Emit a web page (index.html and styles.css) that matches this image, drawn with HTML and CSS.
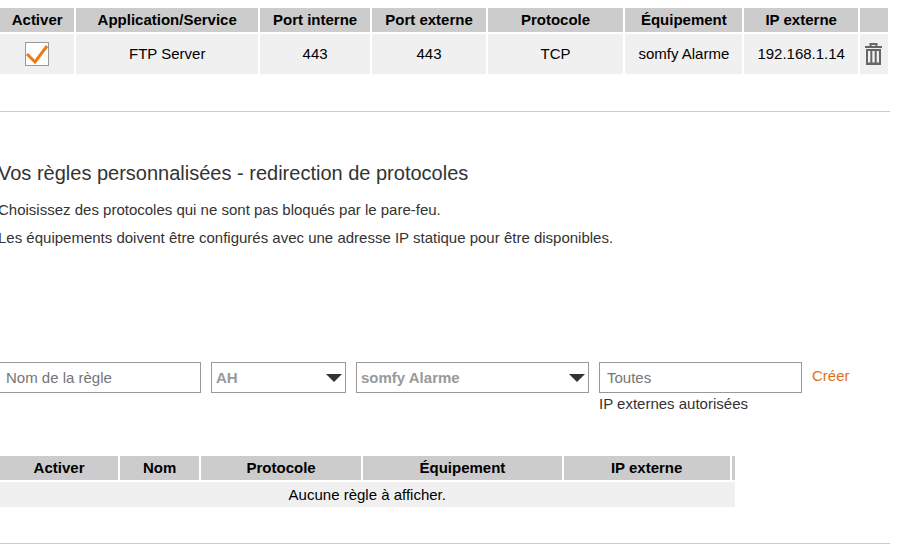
FILE: index.html
```html
<!DOCTYPE html>
<html lang="fr">
<head>
    <meta charset="UTF-8">
    <meta name="viewport" content="width=device-width, initial-scale=1.0">
    <title>Pare-feu - règles personnalisées</title>
    <link rel="stylesheet" href="styles.css">
</head>
<body>
    <main class="page">
        <section class="section section-ports">
            <table class="rules">
                <colgroup>
                    <col class="col-activer">
                    <col class="col-service">
                    <col class="col-interne">
                    <col class="col-externe">
                    <col class="col-protocole">
                    <col class="col-equipement">
                    <col class="col-ip">
                    <col class="col-action">
                </colgroup>
                <thead>
                    <tr>
                        <th>Activer</th>
                        <th>Application/Service</th>
                        <th>Port interne</th>
                        <th>Port externe</th>
                        <th>Protocole</th>
                        <th>Équipement</th>
                        <th>IP externe</th>
                        <th></th>
                    </tr>
                </thead>
                <tbody>
                    <tr class="rule">
                        <td>
                            <label class="check">
                                <input type="checkbox" aria-label="Activer la règle FTP Server" checked>
                                <svg viewBox="0 0 24 24" aria-hidden="true"><path d="M2 12l8 8L22 4"/></svg>
                            </label>
                        </td>
                        <td>FTP Server</td>
                        <td>443</td>
                        <td>443</td>
                        <td>TCP</td>
                        <td>somfy Alarme</td>
                        <td>192.168.1.14</td>
                        <td>
                            <button type="button" class="delete" aria-label="Supprimer">
                                <svg viewBox="0 0 17 22" aria-hidden="true">
                                    <path class="lid" d="M0 3h17v2H0z"/>
                                    <path class="handle" d="M5.5 3.500V1h6v2.500"/>
                                    <path class="can" d="M1 6h15v16H1zM3 8v11.500h2.300V8zM7.300 8v11.500h2.400V8zM11.700 8v11.500h2.300V8z"/>
                                </svg>
                            </button>
                        </td>
                    </tr>
                </tbody>
            </table>
        </section>

        <section class="section">
            <h2>Vos règles personnalisées - redirection de protocoles</h2>
            <p>Choisissez des protocoles qui ne sont pas bloqués par le pare-feu.</p>
            <p>Les équipements doivent être configurés avec une adresse IP statique pour être disponibles.</p>

            <form class="new-rule" action="#" method="post">
                <input type="text" name="nom" placeholder="Nom de la règle" aria-label="Nom de la règle">
                <div class="select">
                    <select name="protocole" aria-label="Protocole">
                        <option>AH</option>
                    </select>
                </div>
                <div class="select">
                    <select name="equipement" aria-label="Équipement">
                        <option>somfy Alarme</option>
                    </select>
                </div>
                <div class="field-ip">
                    <input type="text" id="ip" name="ip" placeholder="Toutes">
                    <label for="ip">IP externes autorisées</label>
                </div>
                <a class="create" href="#">Créer</a>
            </form>

            <table class="rules rules-protocoles">
                <colgroup>
                    <col class="col-p-activer">
                    <col class="col-p-nom">
                    <col class="col-p-protocole">
                    <col class="col-p-equipement">
                    <col class="col-p-ip">
                    <col class="col-p-action">
                </colgroup>
                <thead>
                    <tr>
                        <th>Activer</th>
                        <th>Nom</th>
                        <th>Protocole</th>
                        <th>Équipement</th>
                        <th>IP externe</th>
                        <th></th>
                    </tr>
                </thead>
                <tbody>
                    <tr>
                        <td colspan="6">Aucune règle à afficher.</td>
                    </tr>
                </tbody>
            </table>
        </section>
    </main>
</body>
</html>
```

FILE: styles.css
```css
body {
    font-family: "Liberation Sans", Arial, sans-serif;
    font-size: 15px;
    line-height: 20px;
    color: #333;
    background-color: #fff;
    margin: 0;
}
.page {
    margin: 0 19px 0 -2px;
}
.section {
    border-bottom: 1px solid #ccc;
    padding: 49px 0 34px;
}
.section-ports {
    padding: 6px 0 35px;
}

/* tableaux de règles */
.rules {
    width: 100%;
    table-layout: fixed;
    border-collapse: separate;
    border-spacing: 2px;
    color: #000;
    text-align: center;
}
.rules th,
.rules td {
    padding: 2px 0;
}
.rules th {
    background-color: #ccc;
    font-weight: bold;
}
.rules td {
    background-color: #f0f0f0;
}
.rules .rule td {
    height: 36px;
}
.col-activer { width: 8.5%; }
.col-service { width: 20.8%; }
.col-interne { width: 12.6%; }
.col-externe { width: 13%; }
.col-protocole { width: 15.5%; }
.col-equipement { width: 13.4%; }
.col-ip { width: 13%; }
.col-action { width: 3.2%; }

.check {
    display: block;
    position: relative;
    width: 24px;
    height: 24px;
    margin: 0 auto;
}
.check input {
    appearance: none;
    display: block;
    width: 24px;
    height: 24px;
    margin: 0;
    border: 1px solid #999;
    background-color: #fff;
}
.check svg {
    display: none;
    position: absolute;
    top: 0;
    left: 0;
    fill: none;
    stroke: #f17a13;
    stroke-width: 3;
    pointer-events: none;
}
.check input:checked + svg {
    display: block;
}
.delete {
    display: block;
    margin: 0 auto;
    padding: 0;
    border: none;
    background: none;
    cursor: pointer;
}
.delete svg {
    display: block;
    width: 17px;
    height: 22px;
    fill: #666;
    fill-rule: evenodd;
}
.delete .handle {
    fill: none;
    stroke: #666;
    stroke-width: 2;
}

/* textes */
h2 {
    margin: 0 0 15px;
    font-size: 20px;
    font-weight: normal;
    line-height: 24px;
}
p {
    margin: 0 0 8px;
}

/* ajout d'une règle */
.new-rule {
    display: grid;
    grid-template-columns: 203fr 135fr 233fr 203fr 78fr;
    gap: 10px;
    align-items: start;
    margin: 114px 0 40px;
}
.new-rule input,
.new-rule select {
    display: block;
    width: 100%;
    height: 31px;
    box-sizing: border-box;
    padding: 0 7px;
    border: 1px solid #999;
    border-radius: 0;
    background-color: #fff;
    font-family: inherit;
    font-size: 15px;
}
.new-rule input::placeholder {
    color: #757575;
}
.new-rule select {
    appearance: none;
    padding: 0 4px;
    color: #999;
    font-weight: bold;
}
.select {
    position: relative;
}
.select::after {
    content: "";
    position: absolute;
    top: 12px;
    right: 4px;
    border: 8px solid transparent;
    border-top-color: #333;
    border-bottom: 0;
    pointer-events: none;
}
.field-ip label {
    display: block;
    margin-top: 1px;
}
.create {
    margin-top: 4px;
    color: #e07020;
    text-decoration: none;
}
.create:hover {
    text-decoration: underline;
}

.rules-protocoles {
    width: 82.8%;
}
.rules-protocoles td {
    padding: 3px 0 2px;
}
.col-p-activer { width: 16.3%; }
.col-p-nom { width: 10.9%; }
.col-p-protocole { width: 22.1%; }
.col-p-equipement { width: 27.4%; }
.col-p-ip { width: 22.9%; }
.col-p-action { width: 0.4%; }
```
